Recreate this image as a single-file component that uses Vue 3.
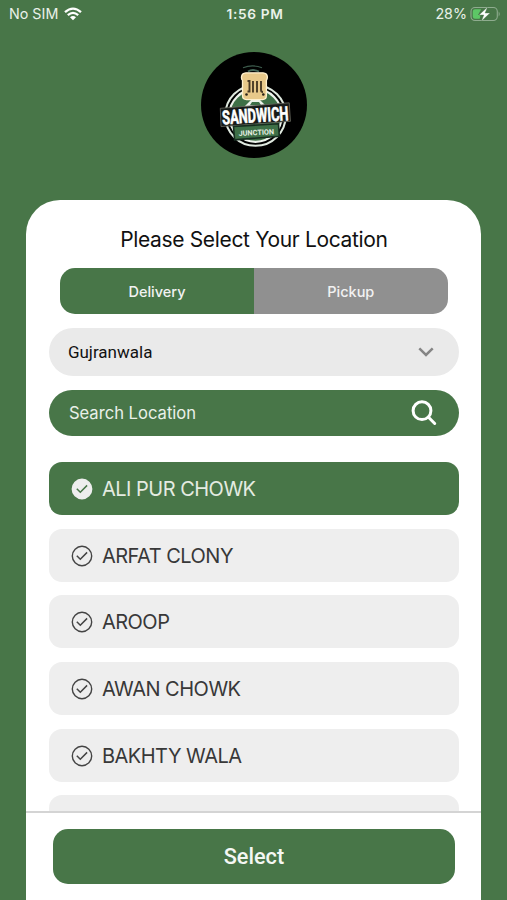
<script setup>
import { ref } from 'vue'

const mode = ref('Delivery')
const selected = ref('ALI PUR CHOWK')
const locations = ['ALI PUR CHOWK', 'ARFAT CLONY', 'AROOP', 'AWAN CHOWK', 'BAKHTY WALA', '']
</script>

<template>
  <main class="screen">
    <header class="status">
      <div class="carrier">
        <span class="nosim">No SIM</span>
        <svg class="wifi" viewBox="0 0 18 14" width="18" height="14" fill="none" stroke="#fff" stroke-width="2.3">
          <path d="M1 5.2Q9-2 17 5.2M3.8 8.2q5.2-4.6 10.4 0" />
          <path d="M6 10.2q3-2.6 6 0L9 13.3z" fill="#fff" stroke="none" />
        </svg>
      </div>
      <span class="time">1:56 PM</span>
      <div class="power">
        <span class="percent">28%</span>
        <svg viewBox="0 0 31 16" width="31" height="16">
          <rect x="1" y="1.5" width="26.3" height="13" rx="4" fill="none" stroke="#8fac8f" stroke-width="1.1" />
          <path d="M5 3.3h6.2L8 9h2.5l-.8 3.7H5Q2.8 12.7 2.8 10.5v-5Q2.8 3.3 5 3.3z" fill="#5dc766" />
          <path d="M28.7 5.5q2 2.5 0 5z" fill="#8fac8f" />
          <path d="M17.6 1 9 9h4.8l-2.5 6.2 8.8-8.2h-5z" fill="#fff" stroke="#487648" stroke-width=".4" />
        </svg>
      </div>
    </header>

    <svg class="logo" viewBox="0 0 106 106" width="106" height="106">
      <circle cx="53" cy="53" r="53" fill="#000" />
      <circle cx="54.5" cy="63.5" r="30.3" fill="none" stroke="#dfe9df" stroke-width="2" />
      <circle cx="54.5" cy="63.5" r="26.3" fill="#3e7047" stroke="#edf3ec" stroke-width="2.2" />
      <path d="M42 15.7q9.5-3.5 19 0" fill="none" stroke="#3d5c4d" stroke-width="1.2" />
      <path d="M47 19.5q4.5-3 11 0" fill="none" stroke="#46695b" stroke-width="1.8" />
      <path d="M43 55h23l-7-7H50z" fill="#edf3ec" />
      <path d="M49 53h11l-2-3h-7z" fill="#3e7047" />
      <path d="M45 20.8h17q4.2.2 4.4 4.3 0 2-1 3.3v15.2q0 4-4 4H45.5q-4 0-4-4V28.4q-1.200-1.300-1-3.300.200-4.100 4.500-4.300z" fill="#e8c98a" stroke="#fff1cf" stroke-width="1.3" />
      <path d="M46.500 29h2v10.500h-2M52 29v11.500M56 29v11.500M60 29v9q0 2 2 2" fill="none" stroke="#4a3b25" stroke-width="1.9" />
      <circle cx="45.500" cy="42.500" r="1.3" fill="#292016" /><circle cx="62.300" cy="42.500" r="1.3" fill="#292016" />
      <path d="m19.300 56.300 68.900-5.500 1.300 18.500-69.500 5.300z" fill="#171b19" stroke="#696960" stroke-width=".8" />
      <path d="m32.500 74.500 45-2.700.8 12.500-44.700 3.500z" fill="#3e7047" stroke="#172d20" stroke-width="1.6" />
      <text class="brand" transform="translate(21.5 72.4) rotate(-3.7) scale(.66 1)">SANDWICH</text>
      <text class="sub" transform="translate(37.700 84) rotate(-3)">JUNCTION</text>
    </svg>

    <section class="card">
      <h1>Please Select Your Location</h1>
      <div class="tabs">
        <button v-for="tab in ['Delivery', 'Pickup']" :key="tab" :class="{ active: mode === tab }" @click="mode = tab">{{ tab }}</button>
      </div>
      <div class="city">
        <span>Gujranwala</span>
        <svg viewBox="0 0 16 10" width="16" height="10" fill="none" stroke="#858585" stroke-width="2.5"><path d="m1.3 1.3 6.7 6.6 6.7-6.6" /></svg>
      </div>
      <div class="search">
        <span>Search Location</span>
        <svg viewBox="0 0 26 26" width="26" height="26" fill="none" stroke="#fff" stroke-width="3" stroke-linecap="round"><circle cx="11" cy="10.700" r="8.900" /><path d="m17.5 17.3 6.2 6.2" /></svg>
      </div>
      <div class="list">
        <div v-for="name in locations" :key="name" class="item" :class="{ selected: selected === name }" @click="selected = name">
          <template v-if="name">
            <svg viewBox="0 0 22 22" width="22" height="22" fill="none">
              <circle class="ring" cx="11" cy="11" r="9.7" />
              <path class="tick" d="m5.8 10.7 3.5 3.6 6.8-6.9" />
            </svg>
            <span>{{ name }}</span>
          </template>
        </div>
      </div>
      <footer><button>Select</button></footer>
    </section>
  </main>
</template>

<style>
body { margin: 0; background: #487648; }
</style>
<style scoped>
* { box-sizing: border-box; }
.screen { width: 507px; height: 900px; overflow: hidden; display: flex; flex-direction: column; background: #487648; font-family: Inter, sans-serif; }
.status { height: 28px; flex: none; display: grid; grid-template-columns: 1fr auto 1fr; align-items: center; padding: 0 6px 1px 9px; color: #eaf1e9; font-size: 14.3px; }
.carrier, .power { display: flex; align-items: center; }
.carrier { gap: 6px; }
.power { justify-content: flex-end; gap: 3px; }
.time { font-size: 13.7px; font-weight: 600; letter-spacing: .65px; }
.logo { display: block; flex: none; margin: 24px 0 0 201px; }
.brand { font: 700 19.5px Roboto, sans-serif; fill: #fff; stroke: #fff; stroke-width: .6; }
.sub { font: 700 7.3px Roboto, sans-serif; fill: #e5eee2; }
.card { width: 455.2px; height: 700px; flex: none; margin: 42px 0 0 26.3px; padding-top: 26.5px; border-radius: 34px 34px 0 0; background: #fff; display: flex; flex-direction: column; align-items: center; overflow: hidden; }
h1 { margin: 0 0 15.7px; height: 26px; line-height: 26px; font-size: 21px; letter-spacing: -.34px; font-weight: 400; color: #111; white-space: nowrap; flex: none; }
button { border: 0; padding: 0; color: #fff; }
.tabs { width: 387.5px; height: 46px; flex: none; display: flex; border-radius: 15px; overflow: hidden; }
.tabs button { flex: 1; background: #909090; color: #f2f2f2; font: 500 14.5px Inter, sans-serif; }
.tabs .active { background: #487648; }
.city, .search { width: 410px; flex: none; display: flex; align-items: center; justify-content: space-between; border-radius: 25px; }
.city { height: 48px; margin-top: 14.3px; padding: 0 25px 0 19px; background: #eaeaea; color: #111; font: 400 17px Roboto, sans-serif; }
.search { height: 45.5px; margin-top: 13.7px; padding: 1px 22px 0 20px; background: #487648; color: #e9f0e8; font-size: 16.6px; }
.list { width: 410px; height: 349.3px; flex: none; margin-top: 26.3px; display: flex; flex-direction: column; gap: 13.47px; overflow: hidden; }
.item { height: 53.2px; flex: none; padding: 1px 0 0 22px; display: flex; align-items: center; gap: 9px; background: #eee; border-radius: 13px; color: #383838; font-size: 20px; letter-spacing: -.5px; }
.ring { stroke: #444; stroke-width: 1.4; }
.tick { stroke: #444; stroke-width: 1.5; }
.selected { background: #487648; color: #e4ebe1; }
.selected .ring { fill: #eee; stroke: #eee; }
.selected .tick { stroke: #487648; }
footer { width: 100%; height: 89px; flex: none; border-top: 2px solid #d4d4d4; padding-top: 16px; display: flex; justify-content: center; align-items: flex-start; }
footer button { width: 402px; height: 54.7px; border-radius: 15px; background: #487648; color: #f4f7f3; font: 500 21.7px Roboto, sans-serif; }
</style>
